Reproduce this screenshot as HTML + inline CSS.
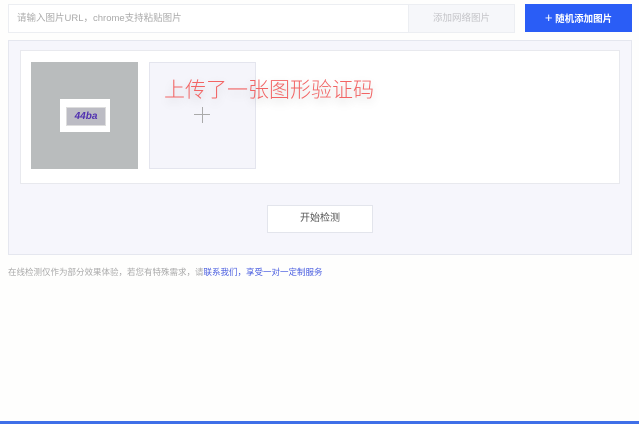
<!DOCTYPE html>
<html><head><meta charset="utf-8"><style>
*{margin:0;padding:0;box-sizing:border-box}
body{width:639px;height:424px;background:#fefefd;position:relative;overflow:hidden;font-family:"Liberation Sans","Noto Sans CJK SC",sans-serif}
.a{position:absolute}
</style></head><body>
<div class="a" style="left:8px;top:4px;width:401px;height:29px;border:1px solid #eceef2;background:#fff;font-size:9.5px;color:#aaa;line-height:27px;padding-left:8px">请输入图片URL，chrome支持粘贴图片</div>
<div class="a" style="left:408px;top:4px;width:107px;height:29px;border:1px solid #eceef2;background:#f6f7fa;font-size:9.5px;color:#c4c4c8;line-height:27px;text-align:center">添加网络图片</div>
<div class="a" style="left:525px;top:4px;width:107px;height:28px;background:#2a5df6;font-size:9.5px;color:#fff;line-height:28px;text-align:center;font-weight:bold"><span style="font-size:13px;font-weight:normal">+</span> 随机添加图片</div>
<div class="a" style="left:8px;top:40px;width:624px;height:215px;background:#f6f6fc;border:1px solid #e5e7ef"></div>
<div class="a" style="left:20px;top:50px;width:600px;height:134px;background:#fff;border:1px solid #e8e9ee"></div>
<div class="a" style="left:31px;top:62px;width:107px;height:107px;background:#b9bcbd"></div>
<div class="a" style="left:60px;top:99px;width:50px;height:33px;background:#fff"></div>
<div class="a" style="left:66px;top:107px;width:40px;height:19px;background:#bcbcc4;border:1px solid #ddd;font-size:10px;font-style:italic;font-weight:bold;color:#5030b0;text-align:center;line-height:17px">44ba</div>
<div class="a" style="left:149px;top:62px;width:107px;height:107px;background:#f5f5fb;border:1px solid #e4e5ee"></div>
<div class="a" style="left:194px;top:114px;width:16px;height:1px;background:#aaa"></div>
<div class="a" style="left:201.5px;top:107px;width:1px;height:16px;background:#aaa"></div>
<div class="a" style="left:164px;top:78px;font-size:21px;font-weight:300;color:#f26464;line-height:26px;text-shadow:0 4px 10px rgba(0,0,0,.2);white-space:nowrap">上传了一张图形验证码</div>
<div class="a" style="left:267px;top:205px;width:106px;height:28px;background:#fff;border:1px solid #e3e5ec;font-size:10px;color:#555;text-align:center;line-height:26px">开始检测</div>
<div class="a" style="left:8px;top:266px;font-size:8.5px;color:#aaa;white-space:nowrap;line-height:12px">在线检测仅作为部分效果体验，若您有特殊需求，请<span style="color:#4a5ee0">联系我们，享受一对一定制服务</span></div>
<div class="a" style="left:0;top:421px;width:639px;height:3px;background:#3f6fe8"></div>
</body></html>
